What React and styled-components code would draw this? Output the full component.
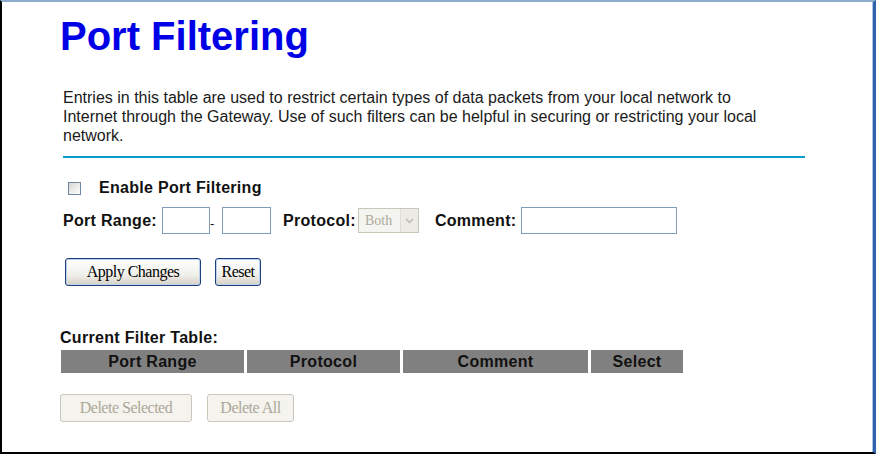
import React from "react";
import styled, { createGlobalStyle } from "styled-components";

const GlobalStyle = createGlobalStyle`
  html, body {
    margin: 0;
    padding: 0;
    background: #ffffff;
  }
  body {
    font-family: "Liberation Sans", Arial, sans-serif;
  }
`;

const Frame = styled.div`
  box-sizing: border-box;
  width: 876px;
  height: 454px;
  border-top: 2px solid #8eaccb;
  border-left: 2px solid #000000;
  border-bottom: 2px solid #000000;
  border-right: 3px solid #2f62ad;
  box-shadow: inset -1px 0 0 #a9c6e6;
  background: #ffffff;
  padding: 11px 0 0 58px;
  overflow: hidden;
`;

const Title = styled.h1`
  margin: 0;
  font-size: 40px;
  line-height: 46px;
  font-weight: bold;
  color: #0000e6;
`;

const Intro = styled.p`
  margin: 29px 0 0 3px;
  width: 725px;
  font-size: 16px;
  line-height: 19px;
  color: #1a1a1a;
`;

const Rule = styled.hr`
  margin: 11px 0 0 3px;
  width: 742px;
  height: 2px;
  border: 0;
  background: #0a9bcf;
`;

const Form = styled.div`
  display: flex;
  flex-direction: column;
  padding-left: 3px;
`;

const CheckRow = styled.label`
  display: flex;
  align-items: center;
  gap: 18px;
  margin-top: 21px;
  padding-left: 5px;
  font-size: 16px;
  letter-spacing: 0.3px;
  font-weight: bold;
  color: #111;
`;

const Box = styled.span`
  box-sizing: border-box;
  width: 13px;
  height: 13px;
  border: 1px solid #6f87a3;
  background: linear-gradient(135deg, #d8d8d0, #ffffff);
`;

const FieldRow = styled.div`
  display: flex;
  align-items: center;
  margin-top: 10px;
  font-size: 16px;
  letter-spacing: 0.3px;
  font-weight: bold;
  color: #111;
`;

const Label = styled.span`
  margin-left: ${(p) => p.$gap || 0}px;
  margin-right: ${(p) => p.$after || 5}px;
`;

const TextBox = styled.span`
  box-sizing: border-box;
  display: inline-block;
  width: ${(p) => p.$w}px;
  height: 27px;
  border: 1px solid #7f9db9;
  background: #fff;
`;

const Dash = styled.span`
  font-weight: normal;
  font-size: 13px;
  width: 12px;
  align-self: flex-end;
  margin-bottom: 3px;
`;

const Select = styled.span`
  box-sizing: border-box;
  display: inline-flex;
  align-items: center;
  justify-content: space-between;
  width: 61px;
  height: 25px;
  border: 1px solid #c9c7ba;
  background: #f4f4f0;
  padding-left: 6px;
  font-family: "Liberation Serif", "Times New Roman", serif;
  font-weight: normal;
  letter-spacing: 0;
  font-size: 14px;
  color: #adaa9c;
`;

const Arrow = styled.span`
  width: 17px;
  height: 23px;
  display: flex;
  align-items: center;
  justify-content: center;
  background: #ecebe6;
  border-left: 1px solid #dedcd3;
`;

const ButtonRow = styled.div`
  display: flex;
  gap: ${(p) => p.$gap}px;
  margin-top: ${(p) => p.$top}px;
  margin-left: ${(p) => p.$left || 0}px;
`;

const Button = styled.button`
  box-sizing: border-box;
  width: ${(p) => p.$w}px;
  height: 28px;
  padding: 0;
  font-family: "Liberation Serif", "Times New Roman", serif;
  font-size: 16px;
  letter-spacing: -0.5px;
  color: ${(p) => (p.disabled ? "#aca899" : "#000")};
  border: 1px solid ${(p) => (p.disabled ? "#c9c7ba" : "#1f3f7a")};
  border-radius: 3px;
  background: ${(p) =>
    p.disabled
      ? "#f4f3ee"
      : "linear-gradient(180deg, #ffffff 0%, #f0f0ea 60%, #d6d0c5 100%)"};
  box-shadow: ${(p) => (p.disabled ? "none" : "inset 0 0 0 1px #bcd0ef")};
`;

const SectionTitle = styled.div`
  margin-top: 43px;
  font-size: 16px;
  letter-spacing: 0.3px;
  font-weight: bold;
  color: #111;
`;

const Table = styled.table`
  margin-top: 3px;
  margin-left: -2px;
  border-collapse: separate;
  border-spacing: 3px 0;
`;

const Th = styled.th`
  width: ${(p) => p.$w}px;
  height: 23px;
  padding: 0;
  background: #808080;
  font-size: 16px;
  letter-spacing: 0.3px;
  font-weight: bold;
  color: #111;
  text-align: center;
`;

export default function App() {
  return (
    <>
      <GlobalStyle />
      <Frame>
        <Title>Port Filtering</Title>
        <Intro>
          Entries in this table are used to restrict certain types of data
          packets from your local network to Internet through the Gateway. Use
          of such filters can be helpful in securing or restricting your local
          network.
        </Intro>
        <Rule />
        <Form>
          <CheckRow>
            <Box />
            Enable Port Filtering
          </CheckRow>
          <FieldRow>
            <Label>Port Range:</Label>
            <TextBox $w={48} />
            <Dash>-</Dash>
            <TextBox $w={49} />
            <Label $gap={12} $after={2}>Protocol:</Label>
            <Select>
              Both
              <Arrow>
                <svg width="9" height="6" viewBox="0 0 9 6">
                  <path d="M1 1 L4.5 4.5 L8 1" fill="none" stroke="#b8b8b0" strokeWidth="1.5" />
                </svg>
              </Arrow>
            </Select>
            <Label $gap={16} $after={5}>Comment:</Label>
            <TextBox $w={156} />
          </FieldRow>
          <ButtonRow $top={24} $left={2} $gap={14}>
            <Button $w={136}>Apply Changes</Button>
            <Button $w={46}>Reset</Button>
          </ButtonRow>
        </Form>
        <SectionTitle>Current Filter Table:</SectionTitle>
        <Table>
          <thead>
            <tr>
              <Th $w={183}>Port Range</Th>
              <Th $w={153}>Protocol</Th>
              <Th $w={185}>Comment</Th>
              <Th $w={92}>Select</Th>
            </tr>
          </thead>
        </Table>
        <ButtonRow $top={21} $gap={15}>
          <Button $w={132} disabled>Delete Selected</Button>
          <Button $w={87} disabled>Delete All</Button>
        </ButtonRow>
      </Frame>
    </>
  );
}
